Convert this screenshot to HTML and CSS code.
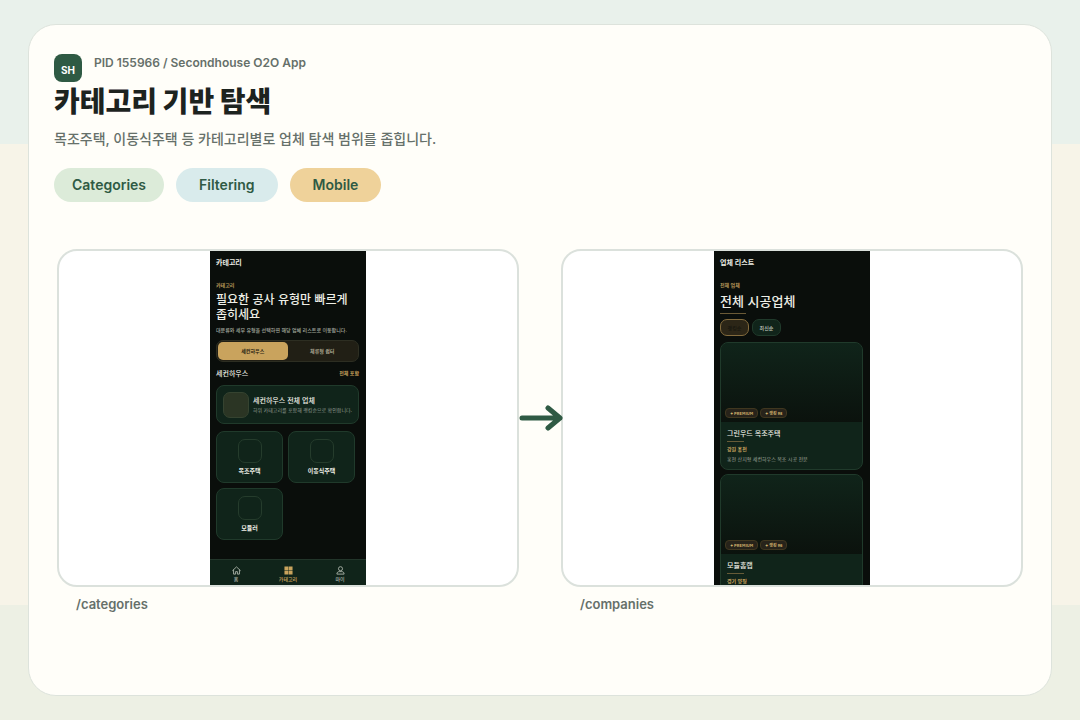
FILE: index.html
```html
<!DOCTYPE html>
<html lang="ko">
<head>
<meta charset="utf-8">
<meta name="viewport" content="width=device-width, initial-scale=1">
<title>카테고리 기반 탐색</title>
<link rel="stylesheet" href="styles.css">
</head>
<body>
<main class="board">
  <header class="intro">
    <div class="brand">
      <span class="logo">SH</span>
      <span class="project">PID 155966 / Secondhouse O2O App</span>
    </div>
    <h1 class="headline">카테고리 기반 탐색</h1>
    <p class="summary">목조주택, 이동식주택 등 카테고리별로 업체 탐색 범위를 좁힙니다.</p>
    <ul class="tags">
      <li class="tag tag-green">Categories</li>
      <li class="tag tag-blue">Filtering</li>
      <li class="tag tag-gold">Mobile</li>
    </ul>
  </header>

  <div class="flow">
    <figure class="step">
      <div class="frame">
        <section class="phone">
          <div class="screen">
            <p class="bar-title">카테고리</p>
            <p class="eyebrow">카테고리</p>
            <h2 class="title">필요한 공사 유형만 빠르게<br>좁히세요</h2>
            <p class="lead">대분류와 세부 유형을 선택하면 해당 업체 리스트로 이동합니다.</p>
            <div class="tabs">
              <button class="tab tab-on" type="button">세컨하우스</button>
              <button class="tab" type="button">체류형 쉼터</button>
            </div>
            <div class="section-head">
              <h3 class="section-title">세컨하우스</h3>
              <span class="section-note">전체 포함</span>
            </div>
            <a class="all-card" href="#all">
              <span class="all-thumb"></span>
              <span class="all-text">
                <span class="all-name">세컨하우스 전체 업체</span>
                <span class="all-desc">하위 카테고리를 포함해 랭킹순으로 확인합니다.</span>
              </span>
            </a>
            <div class="tiles">
              <a class="tile" href="#wood"><span class="tile-icon"></span>목조주택</a>
              <a class="tile" href="#mobile"><span class="tile-icon"></span>이동식주택</a>
              <a class="tile" href="#modular"><span class="tile-icon"></span>모듈러</a>
            </div>
          </div>
          <nav class="nav">
            <a class="nav-item" href="#home">
              <svg class="nav-icon" viewBox="0 0 20 20" fill="none" stroke="currentColor" stroke-width="2" stroke-linecap="round" stroke-linejoin="round"><path d="M1.500 10 10 2l8.500 8M3.500 9v9H8v-5.500h4V18h4.500V9"/></svg>
              홈
            </a>
            <a class="nav-item nav-on" href="#categories">
              <svg class="nav-icon" viewBox="0 0 20 20" fill="currentColor"><path d="M1 1h8.500v8.500H1zM10.500 1H19v8.500h-8.500zM1 10.500h8.500V19H1zM10.500 10.500H19V19h-8.500z"/></svg>
              카테고리
            </a>
            <a class="nav-item" href="#my">
              <svg class="nav-icon" viewBox="0 0 20 20" fill="none" stroke="currentColor" stroke-width="2" stroke-linejoin="round"><circle cx="10" cy="6" r="4.500"/><path d="M2 18c0-4 2.500-5.500 5-5.500h6c2.500 0 5 1.500 5 5.500z"/></svg>
              마이
            </a>
          </nav>
        </section>
      </div>
      <figcaption class="route">/categories</figcaption>
    </figure>

    <svg class="arrow" viewBox="0 0 46 30" fill="none" stroke="#2f5a44" stroke-width="5" stroke-linecap="round" stroke-linejoin="round"><path d="M5 15h38M31 5l12 10-12 10"/></svg>

    <figure class="step">
      <div class="frame">
        <section class="phone">
          <div class="screen">
            <p class="bar-title">업체 리스트</p>
            <p class="eyebrow">전체 업체</p>
            <h2 class="title title-list">전체 시공업체</h2>
            <div class="chips">
              <button class="chip chip-on" type="button">랭킹순</button>
              <button class="chip" type="button">최신순</button>
            </div>
            <article class="company">
              <div class="cover"><span class="badge">✦ PREMIUM</span><span class="badge">✦ 랭킹 98</span></div>
              <div class="info">
                <h3 class="name">그린우드 목조주택</h3>
                <p class="place">강원 홍천</p>
                <p class="desc">홍천 산지형 세컨하우스 목조 시공 전문</p>
              </div>
            </article>
            <article class="company">
              <div class="cover"><span class="badge">✦ PREMIUM</span><span class="badge">✦ 랭킹 96</span></div>
              <div class="info">
                <h3 class="name">모듈홈랩</h3>
                <p class="place">경기 양평</p>
              </div>
            </article>
          </div>
        </section>
      </div>
      <figcaption class="route">/companies</figcaption>
    </figure>
  </div>
</main>
</body>
</html>
```
FILE: styles.css
```css
* { box-sizing: border-box; }

body, h1, h2, h3, p, ul, figure { margin: 0; padding: 0; }

body {
  min-height: 100vh;
  padding: 24px 28px;
  display: flex;
  background: linear-gradient(#e9f1eb 0 20%, #f7f4e8 20% 84%, #edf0e4 84%);
  font-family: Inter, "Noto Sans CJK KR", sans-serif;
  color: #1d231f;
}

a { color: inherit; text-decoration: none; }

.board {
  flex: 1;
  padding: 29px 28px 29px 25px;
  background: #fffef9;
  border: 1px solid #dde3dc;
  border-radius: 28px;
}

.brand { display: flex; gap: 12px; }

.logo {
  width: 28px;
  height: 28px;
  padding-top: 4px;
  display: grid;
  place-items: center;
  border-radius: 8px;
  background: #2f5a44;
  color: #fff;
  font-size: 10px;
  font-weight: 700;
}

.project {
  line-height: 18px;
  font-size: 12px;
  font-weight: 600;
  color: #66706a;
}

.headline {
  font-size: 28px;
  line-height: 40px;
  font-weight: 900;
}

.summary {
  margin-top: 6px;
  font-size: 14px;
  line-height: 22px;
  font-weight: 500;
  color: #66706a;
}

.tags {
  margin-top: 18px;
  display: flex;
  gap: 12px;
  list-style: none;
}

.tag {
  padding: 0 18px;
  border-radius: 17px;
  font-size: 14px;
  line-height: 34px;
  font-weight: 600;
  color: #2f5a44;
}

.tag-green { background: #dcebd9; }
.tag-blue { padding: 0 23px; background: #d9ebec; }
.tag-gold { padding: 0 23px; background: #efd29a; }

.flow {
  margin: 47px 0 0 3px;
  display: flex;
  align-items: center;
}

.step { flex: 1; }

.frame {
  display: flex;
  justify-content: center;
  background: #fff;
  border: 2px solid #dbe1dc;
  border-radius: 20px;
}

.route {
  padding: 8px 19px 0;
  font-size: 13px;
  line-height: 18px;
  font-weight: 600;
  color: #66706a;
}

.arrow {
  position: relative;
  z-index: 1;
  width: 46px;
  height: 30px;
  margin: 0 -2px 26px;
}

.phone {
  width: 156px;
  aspect-ratio: 156 / 334;
  display: flex;
  flex-direction: column;
  overflow: hidden;
  background: #0a0e0b;
  color: #eeeee6;
  font-family: "Noto Sans CJK KR", sans-serif;
  font-size: 5px;
  line-height: 8px;
}

.screen {
  flex: 1;
  min-height: 0;
  padding: 6px 7px 0 6px;
}

.bar-title { font-size: 7px; line-height: 10px; font-weight: 700; }

.eyebrow { margin-top: 14px; color: #b9985a; font-weight: 700; }

.title { margin-top: 2px; font-size: 12px; line-height: 15px; font-weight: 500; }

.title-list {
  width: fit-content;
  padding: 2px 0 6px;
  font-size: 13px;
  background: linear-gradient(#6b5a36, #6b5a36) left bottom / 26px 1px no-repeat;
}

.lead { margin-top: 5px; color: #a0a69c; font-weight: 500; white-space: nowrap; }

.tabs {
  margin-top: 6px;
  height: 22px;
  padding: 1px;
  display: flex;
  background: #211f15;
  border: 1px solid #2d2e22;
  border-radius: 7px;
}

.tab {
  flex: 1;
  padding: 0;
  border: 0;
  border-radius: 5px;
  background: none;
  color: #aaa68f;
  font: inherit;
  font-weight: 700;
}

.tab-on { background: #c9a35d; color: #2b2414; }

.section-head {
  margin-top: 6px;
  display: flex;
  align-items: center;
  justify-content: space-between;
}

.section-title { font-size: 7px; line-height: 10px; font-weight: 500; }

.section-note { color: #c9a35d; font-weight: 700; }

.all-card {
  margin-top: 7px;
  height: 39px;
  padding: 0 6px;
  display: flex;
  align-items: center;
  gap: 4px;
  background: #10241a;
  border: 1px solid #203a2b;
  border-radius: 8px;
}

.all-thumb {
  width: 26px;
  height: 26px;
  flex: none;
  background: #2b3524;
  border: 1px solid #354330;
  border-radius: 7px;
}

.all-text { display: grid; white-space: nowrap; }
.all-name { font-size: 7px; line-height: 10px; font-weight: 500; }
.all-desc { line-height: 9px; color: #919b91; }

.tiles {
  margin-top: 7px;
  padding-right: 4px;
  display: grid;
  grid-template-columns: 1fr 1fr;
  gap: 5px;
}

.tile {
  height: 52px;
  padding-top: 7px;
  display: flex;
  flex-direction: column;
  align-items: center;
  gap: 4px;
  background: #10241a;
  border: 1px solid #203a2b;
  border-radius: 8px;
  font-size: 6px;
  line-height: 8px;
  font-weight: 700;
}

.tile-icon {
  width: 24px;
  height: 24px;
  border: 1px solid #253c2c;
  border-radius: 7px;
}

.nav {
  height: 26px;
  padding-top: 6px;
  display: flex;
  background: #10241a;
  border-top: 1px solid #22352a;
}

.nav-item {
  flex: 1;
  display: flex;
  flex-direction: column;
  align-items: center;
  color: #adb5aa;
  line-height: 7px;
  font-weight: 500;
}

.nav-on { color: #c9a35d; }

.nav-icon { width: 9px; height: 9px; }

.chips { margin-top: 5px; display: flex; gap: 3px; }

.chip {
  width: 29px;
  height: 17px;
  padding: 0;
  background: #10241a;
  border: 1px solid #203a2b;
  border-radius: 7px;
  color: #c7ccc0;
  font: inherit;
  font-weight: 500;
}

.chip-on { background: #2c2617; border-color: #836b3d; color: #17160f; }

.company {
  margin-top: 6px;
  overflow: hidden;
  background: #10241a;
  border: 1px solid #203a2b;
  border-radius: 8px;
}

.company + .company { margin-top: 4px; }

.cover {
  height: 79px;
  padding: 0 4px 4px;
  display: flex;
  align-items: flex-end;
  gap: 2px;
  background: linear-gradient(#10241a, #0b120d);
}

.badge {
  height: 10px;
  padding: 0 4px;
  display: flex;
  align-items: center;
  background: #27231a;
  border: 1px solid #40371f;
  border-radius: 4px;
  color: #d4b26d;
  font-size: 4px;
  font-weight: 700;
  white-space: nowrap;
}

.info { padding: 6px; }

.name {
  padding-bottom: 3px;
  font-size: 7px;
  line-height: 11px;
  font-weight: 500;
  background: linear-gradient(#665b37, #665b37) left bottom / 17px 1px no-repeat;
}

.place { margin-top: 3px; color: #c9a35d; font-weight: 700; }
.desc { margin-top: 2px; color: #a0a69c; white-space: nowrap; }
```
